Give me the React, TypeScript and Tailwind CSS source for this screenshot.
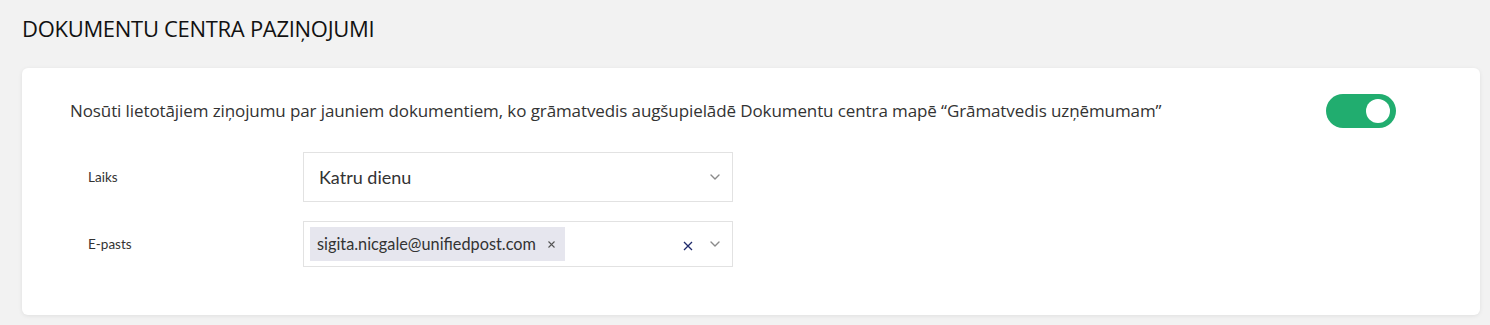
import React from "react";

const Chevron = ({ className = "" }: { className?: string }) => (
  <svg width="10" height="6" viewBox="0 0 10 6" className={className} fill="none">
    <path d="M1 1l4 4 4-4" stroke="#8a8a8a" strokeWidth="1.4" strokeLinecap="round" strokeLinejoin="round" />
  </svg>
);

export default function App() {
  return (
    <div className="w-[1490px] h-[325px] bg-[#f2f2f2] px-[22px] pt-[12px] box-border overflow-hidden">
      <h1 className="font-['Open_Sans',sans-serif] text-[22px] leading-[32px] text-[#111] tracking-[-0.3px]">
        DOKUMENTU CENTRA PAZIŅOJUMI
      </h1>
      <div className="mt-[24px] w-[1458px] h-[247px] bg-white rounded-[6px] shadow-[0_1px_4px_rgba(0,0,0,0.08)] pl-[48px] pr-[84px] pt-[26px] box-border">
        <div className="flex items-center justify-between h-[34px]">
          <p className="font-['Open_Sans',sans-serif] text-[17px] text-[#333] tracking-[-0.1px]">
            Nosūti lietotājiem ziņojumu par jauniem dokumentiem, ko grāmatvedis augšupielādē Dokumentu centra mapē “Grāmatvedis uzņēmumam”
          </p>
          <div className="w-[70px] h-[34px] rounded-full bg-[#21ad6f] flex items-center justify-end pr-[6px] box-border">
            <div className="w-[24px] h-[24px] rounded-full bg-white" />
          </div>
        </div>
        <div className="mt-[24px] flex items-center">
          <div className="w-[233px] pl-[18px] font-['Lato',sans-serif] text-[13.5px] text-[#333]">Laiks</div>
          <div className="w-[430px] h-[50px] border border-[#e2e2e2] flex items-center pl-[15px] pr-[12px] box-border">
            <span className="flex-1 font-['Lato',sans-serif] text-[18px] text-[#333]">Katru dienu</span>
            <Chevron />
          </div>
        </div>
        <div className="mt-[19px] flex items-center">
          <div className="w-[233px] pl-[18px] font-['Lato',sans-serif] text-[13.5px] text-[#333]">E-pasts</div>
          <div className="w-[430px] h-[46px] border border-[#e2e2e2] flex items-center pl-[6px] pr-[12px] box-border">
            <div className="flex-1 flex">
              <div className="h-[34px] bg-[#e6e6ee] flex items-center pl-[7px] pr-[10px] gap-[12px] font-['Lato',sans-serif] text-[16.3px] text-[#333]">
                <span>sigita.nicgale@unifiedpost.com</span>
                <svg width="7" height="7" viewBox="0 0 7 7" fill="none">
                  <path d="M0.5 0.5l6 6M6.5 0.5l-6 6" stroke="#555" strokeWidth="1.1" />
                </svg>
              </div>
            </div>
            <svg width="10" height="10" viewBox="0 0 10 10" fill="none" className="mr-[17px] mt-[3px]">
              <path d="M1 1l8 8M9 1l-8 8" stroke="#1f2a6b" strokeWidth="1.3" />
            </svg>
            <Chevron />
          </div>
        </div>
      </div>
    </div>
  );
}
